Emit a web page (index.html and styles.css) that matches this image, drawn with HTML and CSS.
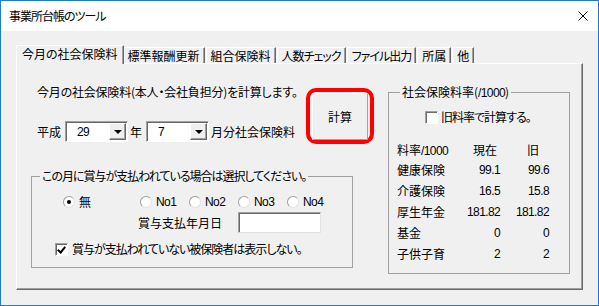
FILE: index.html
```html
<!DOCTYPE html>
<html lang="ja">
<head>
  <meta charset="UTF-8" />
  <title>事業所台帳のツール</title>
  <link rel="stylesheet" href="styles.css">
</head>
<body>
  <div class="window">
    <div class="titlebar">
      <span class="title">事業所台帳のツール</span>
      <svg class="close" width="10" height="10" viewBox="0 0 10 10">
        <path d="M0.5 0.5 L9.5 9.5 M9.5 0.5 L0.5 9.5" stroke="#000" stroke-width="1" fill="none"/>
      </svg>
    </div>
    <div class="client">
      <div class="tabs">
        <div class="tab active">今月の社会保険料</div>
        <div class="tab">標準報酬更新</div>
        <div class="tab">組合保険料</div>
        <div class="tab kana">人数チェック</div>
        <div class="tab kana">ファイル出力</div>
        <div class="tab">所属</div>
        <div class="tab">他</div>
      </div>
      <div class="panel">
        <div class="main-col">
          <div class="top-row">
            <div class="calc-info">
              <p class="intro">今月の社会保険料(本人・会社負担分)を計算します。</p>
              <div class="date-row">
                <span>平成</span>
                <div class="combo"><span class="combo-value num">29</span><span class="combo-btn"></span></div>
                <span>年</span>
                <div class="combo"><span class="combo-value num">7</span><span class="combo-btn"></span></div>
                <span>月分社会保険料</span>
              </div>
            </div>
            <div class="highlight"><button class="calc-btn">計算</button></div>
          </div>
          <div class="group bonus">
            <span class="legend">この月に賞与が支払われている場合は選択してください。</span>
            <div class="radio-row">
              <label class="radio-item"><span class="radio checked"></span>無</label>
              <label class="radio-item"><span class="radio"></span><span class="num">No1</span></label>
              <label class="radio-item"><span class="radio"></span><span class="num">No2</span></label>
              <label class="radio-item"><span class="radio"></span><span class="num">No3</span></label>
              <label class="radio-item"><span class="radio"></span><span class="num">No4</span></label>
            </div>
            <div class="pay-row">
              <span>賞与支払年月日</span>
              <span class="textbox"></span>
            </div>
            <label class="check-row"><span class="checkbox checked"></span>賞与が支払われていない被保険者は表示しない。</label>
          </div>
        </div>
        <div class="group rates">
          <span class="legend">社会保険料率(<span class="num">/1000</span>)</span>
          <label class="check-row old-rate"><span class="checkbox"></span>旧料率で計算する。</label>
          <div class="rate-table">
            <div class="rate-head">料率<span class="num">/1000</span></div>
            <div class="rate-head val">現在</div>
            <div class="rate-head val old">旧</div>

            <div class="rate-cell">健康保険</div>
            <div class="rate-cell val num">99.1</div>
            <div class="rate-cell val num">99.6</div>

            <div class="rate-cell">介護保険</div>
            <div class="rate-cell val num">16.5</div>
            <div class="rate-cell val num">15.8</div>

            <div class="rate-cell">厚生年金</div>
            <div class="rate-cell val num">181.82</div>
            <div class="rate-cell val num">181.82</div>

            <div class="rate-cell">基金</div>
            <div class="rate-cell val num">0</div>
            <div class="rate-cell val num">0</div>

            <div class="rate-cell">子供子育</div>
            <div class="rate-cell val num">2</div>
            <div class="rate-cell val num">2</div>
          </div>
        </div>
      </div>
    </div>
  </div>
</body>
</html>
```

FILE: styles.css
```css
body { margin: 0; font-family: "Noto Sans CJK JP", sans-serif; font-size: 12px; font-feature-settings: "palt"; color: #000; }
.window { width: 599px; height: 306px; box-sizing: border-box; border: 1px solid #1c7cd5; background: #f0f0f0; }
.titlebar { height: 30px; background: #fff; display: flex; align-items: center; justify-content: space-between; padding: 0 10px 0 8px; }
.title { line-height: 16px; letter-spacing: -1px; }
.client { padding: 14px 0 0 15px; }

.tabs { display: flex; align-items: flex-end; height: 18px; }
.tab { box-sizing: border-box; height: 16px; line-height: 15px; padding: 0 4px; margin-right: 1px; border-top: 1px solid #fff; border-left: 1px solid #fff; border-right: 1px solid #696969; box-shadow: inset -1px 0 0 #a0a0a0; white-space: nowrap; }
.tab.kana { letter-spacing: -1px; }
.tab.active { height: 19px; line-height: 16px; padding: 0 5px; margin-right: -1px; margin-bottom: -1px; background: #f0f0f0; position: relative; z-index: 1; }

.panel { box-sizing: border-box; width: 567px; height: 227px; display: flex; padding-left: 14px; border-top: 1px solid #fff; border-left: 1px solid #fff; border-right: 1px solid #696969; border-bottom: 1px solid #696969; box-shadow: inset -1px -1px 0 #a0a0a0; }
.main-col { width: 343px; }
.top-row { display: flex; height: 112px; }
.calc-info { width: 275px; padding: 20px 0 0 6px; }
.intro { margin: 0; line-height: 16px; white-space: nowrap; letter-spacing: -0.2px; }
.date-row { display: flex; align-items: center; gap: 4px; margin-top: 21px; height: 21px; white-space: nowrap; }
.date-row .combo + span { margin-left: -2px; }

.num { font-family: "Liberation Sans", sans-serif; letter-spacing: -0.6px; }
.combo { box-sizing: border-box; width: 63px; height: 21px; display: flex; align-items: center; justify-content: space-between; background: #fff; border-top: 1px solid #a0a0a0; border-left: 1px solid #a0a0a0; border-right: 1px solid #fff; border-bottom: 1px solid #fff; box-shadow: inset 1px 1px 0 #696969; padding: 1px 1px 1px 11px; }
.combo-value { line-height: 16px; }
.combo-btn { box-sizing: border-box; width: 17px; height: 17px; background: #f0f0f0; border-top: 1px solid #fff; border-left: 1px solid #fff; border-right: 1px solid #696969; border-bottom: 1px solid #696969; box-shadow: inset -1px -1px 0 #a0a0a0; display: flex; align-items: center; justify-content: center; }
.combo-btn::after { content: ""; border-left: 4px solid transparent; border-right: 4px solid transparent; border-top: 4px solid #000; margin-top: 1px; }

.highlight { margin-top: 24px; margin-left: 6px; padding: 1px 2px 0 2px; border: 4px solid #ff0000; border-radius: 10px; height: 47px; }
.calc-btn { box-sizing: border-box; width: 56px; height: 47px; font: inherit; background: #f0f0f0; color: #000; border-top: 1px solid #fff; border-left: 1px solid #fff; border-right: 1px solid #a0a0a0; border-bottom: 1px solid #a0a0a0; padding: 0; }

.group { position: relative; box-sizing: border-box; border: 1px solid #a0a0a0; }
.legend { position: absolute; top: -9px; line-height: 16px; padding: 0 2px; background: #f0f0f0; white-space: nowrap; }
.bonus { width: 322px; height: 92px; padding: 17px 0 0 0; }
.bonus .legend { left: 8px; letter-spacing: -1px; }
.radio-row { display: grid; grid-template-columns: 77px repeat(4, 49px); padding-left: 31px; line-height: 16px; }
.radio-item { display: flex; align-items: center; gap: 4px; }
.radio { box-sizing: border-box; width: 12px; height: 12px; border-radius: 50%; background: #fff; border: 1px solid #a0a0a0; border-right-color: #e3e3e3; border-bottom-color: #e3e3e3; display: flex; align-items: center; justify-content: center; }
.radio.checked::after { content: ""; width: 4px; height: 4px; border-radius: 50%; background: #000; }
.pay-row { display: flex; align-items: center; gap: 16px; margin-top: 2px; padding-left: 106px; height: 21px; }
.textbox { box-sizing: border-box; width: 83px; height: 21px; background: #fff; border-top: 1px solid #a0a0a0; border-left: 1px solid #a0a0a0; border-right: 1px solid #e3e3e3; border-bottom: 1px solid #e3e3e3; box-shadow: inset 1px 1px 0 #696969; }
.check-row { display: flex; align-items: center; gap: 4px; line-height: 16px; white-space: nowrap; letter-spacing: -1px; }
.bonus .check-row { margin-top: 8px; padding-left: 23px; }
.checkbox { box-sizing: border-box; width: 13px; height: 13px; background: #fff; border-top: 1px solid #a0a0a0; border-left: 1px solid #a0a0a0; border-right: 1px solid #fff; border-bottom: 1px solid #fff; box-shadow: inset 1px 1px 0 #696969; position: relative; }
.checkbox.checked::after { content: ""; position: absolute; left: 3px; top: 1px; width: 3px; height: 6px; border-right: 2px solid #000; border-bottom: 2px solid #000; transform: rotate(40deg); }

.rates { width: 182px; height: 182px; margin-left: 14px; margin-top: 28px; padding: 16px 0 0 8px; }
.rates .legend { left: 11px; }
.old-rate { padding-left: 28px; gap: 3px; }
.rate-table { display: grid; grid-template-columns: 70px 33px 49px; grid-template-rows: 18px repeat(5, 21px); align-items: center; margin-top: 16px; white-space: nowrap; }
.rate-cell, .rate-head { line-height: 16px; }
.val { text-align: right; }
.rate-head.val { padding-right: 3px; }
.rate-head.old { padding-right: 10px; }
```
